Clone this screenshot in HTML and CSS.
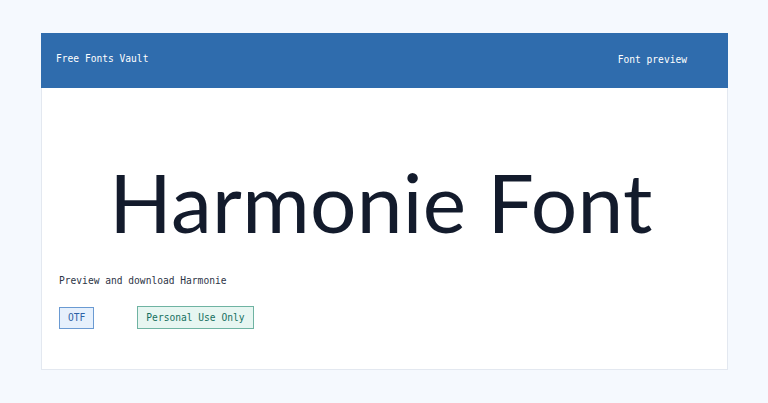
FILE: index.html
```html
<!DOCTYPE html>
<html lang="en">
<head>
<meta charset="utf-8">
<title>Harmonie Font - Free Fonts Vault</title>
<link rel="stylesheet" href="styles.css">
</head>
<body>
  <main class="card">
    <header class="topbar">
      <span class="brand">Free Fonts Vault</span>
      <span class="crumb">Font preview</span>
    </header>
    <section class="preview">
      <h1 class="specimen">Harmonie Font</h1>
      <p class="lead">Preview and download Harmonie</p>
      <div class="tags">
        <span class="tag tag-format">OTF</span>
        <span class="tag tag-license">Personal Use Only</span>
      </div>
    </section>
  </main>
</body>
</html>
```

FILE: styles.css
```css
html, body {
  margin: 0;
  padding: 0;
}

body {
  background: #f5f9fe;
  font-family: "DejaVu Sans Mono", "Liberation Mono", monospace;
  padding: 33px 0 0 41px;
}

.card {
  width: 685px;
  height: 336px;
  background: #ffffff;
  border: 1px solid #e3e8f0;
  border-top: 0;
  box-sizing: content-box;
  display: flex;
  flex-direction: column;
}

.topbar {
  height: 55px;
  background: #2f6cad;
  color: #ffffff;
  display: flex;
  justify-content: space-between;
  align-items: center;
  padding: 0 41px 0 15px;
  font-size: 9.6px;
  margin: 0 -1px;
}

.brand {
  transform: translateY(-2px);
}

.crumb {
  transform: translateY(-1px);
}

.preview {
  padding: 0 17px;
  display: flex;
  flex-direction: column;
}

.specimen {
  margin: 72px 0 0;
  padding-right: 7px;
  font-family: "Lato", sans-serif;
  font-weight: 400;
  font-size: 82px;
  line-height: 82px;
  color: #131b2c;
  text-align: center;
  letter-spacing: 0.3px;
}

.lead {
  margin: 33px 0 0;
  font-size: 9.6px;
  color: #2d3446;
}

.tags {
  margin-top: 20px;
  display: flex;
  gap: 43px;
  align-items: center;
}

.tag {
  font-size: 9.6px;
  display: inline-flex;
  align-items: center;
  padding: 0 8px;
  border-width: 1px;
  border-style: solid;
}

.tag-format {
  height: 20px;
  background: #e6f0fc;
  border-color: #6a9ad2;
  color: #2d62a6;
}

.tag-license {
  height: 21px;
  background: #e7f6f1;
  border-color: #6fb3a2;
  color: #16705e;
}
```
